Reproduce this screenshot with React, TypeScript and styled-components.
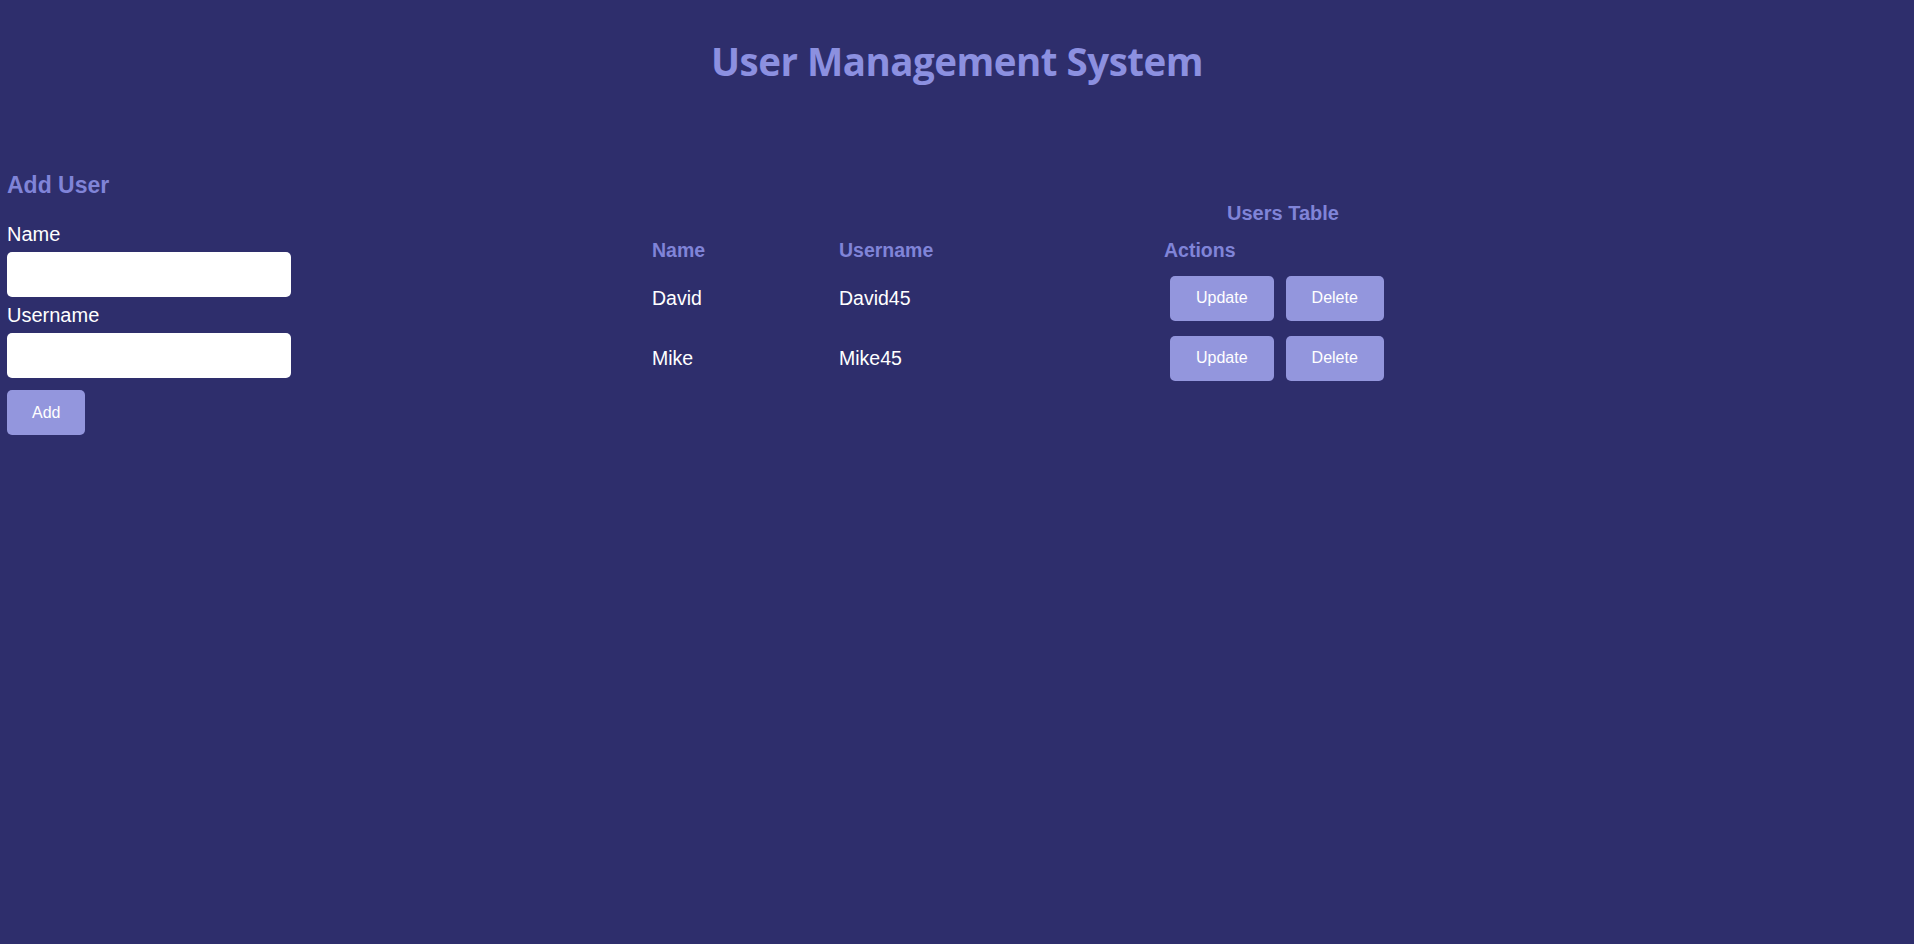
import React, { FunctionComponent, useState } from 'react'
import styled, { createGlobalStyle } from 'styled-components'

const GlobalStyle = createGlobalStyle`
  html, body {
    margin: 0;
    padding: 0;
    background: #2e2e6c;
    min-height: 100%;
  }
  body {
    font-family: "Liberation Sans", Arial, sans-serif;
    color: #ffffff;
  }
`

const Page = styled.div`
  min-height: 944px;
  background: #2e2e6c;
`

const Title = styled.h1`
  margin: 0;
  padding-top: 35px;
  text-align: center;
  font-family: "Open Sans", "Noto Sans", sans-serif;
  font-size: 38.5px;
  font-weight: 700;
  letter-spacing: -0.5px;
  line-height: 1.36;
  color: #8c90e0;
`

const Main = styled.div`
  display: flex;
  align-items: flex-start;
  margin-top: 85px;
`

const FormPanel = styled.section`
  width: 650px;
  flex-shrink: 0;
  box-sizing: border-box;
  padding-left: 7px;
`

const SectionHeading = styled.h2`
  margin: 0 0 25px;
  font-size: 23px;
  font-weight: 700;
  line-height: 26px;
  color: #8084d8;
`

const FieldLabel = styled.label`
  display: block;
  font-size: 20px;
  line-height: 23px;
  margin-bottom: 6px;
  color: #ffffff;
`

const TextInput = styled.input`
  display: block;
  box-sizing: border-box;
  width: 284px;
  height: 45px;
  margin: 0 0 7px;
  padding: 0 10px;
  border: none;
  border-radius: 5px;
  background: #ffffff;
  font-size: 16px;
  font-family: inherit;
  outline: none;
`

const Button = styled.button`
  height: 45px;
  padding: 0 26px;
  border: none;
  border-radius: 5px;
  background: #9396dd;
  color: #ffffff;
  font-family: "Liberation Sans", Arial, sans-serif;
  font-size: 16px;
  cursor: pointer;
`

const AddButton = styled(Button)`
  margin-top: 5px;
  padding: 0 25px;
`

const TablePanel = styled.section`
  flex: 1;
  padding-top: 30px;
  margin-left: 2px;
`

const TableTitle = styled.h3`
  margin: 0 0 14px;
  text-align: center;
  font-size: 20px;
  font-weight: 700;
  line-height: 23px;
  color: #8084d8;
`

const UsersTable = styled.table`
  border-collapse: collapse;
  border-spacing: 0;
`

const HeadCell = styled.th<{ $width?: number }>`
  width: ${(props) => (props.$width ? `${props.$width}px` : 'auto')};
  padding: 0 0 6px;
  text-align: left;
  vertical-align: top;
  font-size: 19.5px;
  font-weight: 700;
  line-height: 23px;
  color: #8084d8;
`

const Cell = styled.td`
  height: 60px;
  padding: 0;
  vertical-align: middle;
  font-size: 19.5px;
  line-height: 23px;
  color: #ffffff;
`

const ActionButton = styled(Button)`
  margin: 0 6px;
`

interface User {
  name: string
  username: string
}

const initialUsers: User[] = [
  { name: 'David', username: 'David45' },
  { name: 'Mike', username: 'Mike45' },
]

const AddUserForm: FunctionComponent<{ onAdd: (user: User) => void }> = ({ onAdd }) => {
  const [name, setName] = useState('')
  const [username, setUsername] = useState('')

  const submit = (e: React.FormEvent) => {
    e.preventDefault()
    if (!name || !username) return
    onAdd({ name, username })
    setName('')
    setUsername('')
  }

  return (
    <FormPanel>
      <SectionHeading>Add User</SectionHeading>
      <form onSubmit={submit}>
        <FieldLabel htmlFor="name">Name</FieldLabel>
        <TextInput id="name" value={name} onChange={(e) => setName(e.target.value)} />
        <FieldLabel htmlFor="username">Username</FieldLabel>
        <TextInput id="username" value={username} onChange={(e) => setUsername(e.target.value)} />
        <AddButton type="submit">Add</AddButton>
      </form>
    </FormPanel>
  )
}

const UserTable: FunctionComponent<{ users: User[]; onDelete: (i: number) => void }> = ({
  users,
  onDelete,
}) => (
  <TablePanel>
    <TableTitle>Users Table</TableTitle>
    <UsersTable>
      <thead>
        <tr>
          <HeadCell $width={187}>Name</HeadCell>
          <HeadCell $width={325}>Username</HeadCell>
          <HeadCell>Actions</HeadCell>
        </tr>
      </thead>
      <tbody>
        {users.map((user, i) => (
          <tr key={user.username}>
            <Cell>{user.name}</Cell>
            <Cell>{user.username}</Cell>
            <Cell>
              <ActionButton>Update</ActionButton>
              <ActionButton onClick={() => onDelete(i)}>Delete</ActionButton>
            </Cell>
          </tr>
        ))}
      </tbody>
    </UsersTable>
  </TablePanel>
)

export default function App() {
  const [users, setUsers] = useState<User[]>(initialUsers)

  return (
    <Page>
      <GlobalStyle />
      <Title>User Management System</Title>
      <Main>
        <AddUserForm onAdd={(user) => setUsers([...users, user])} />
        <UserTable users={users} onDelete={(i) => setUsers(users.filter((_, j) => j !== i))} />
      </Main>
    </Page>
  )
}
